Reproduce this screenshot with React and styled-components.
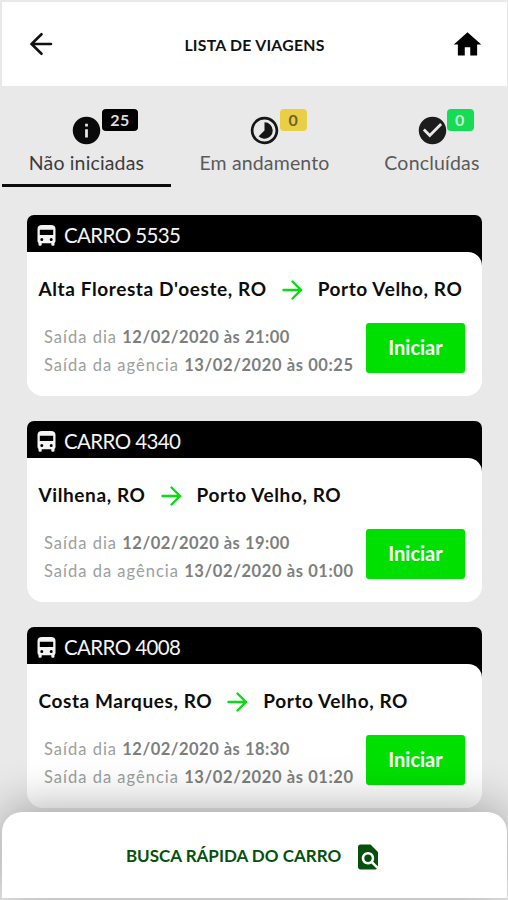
import React from "react"
import styled, { createGlobalStyle } from "styled-components"
import {
  MdHome,
  MdInfo,
  MdTimelapse,
  MdCheckCircle,
  MdFindInPage,
} from "react-icons/md"

const GlobalStyle = createGlobalStyle`
  * {
    box-sizing: border-box;
  }

  body {
    margin: 0;
    background: #e9e9e9;
    font-family: Lato, "Open Sans", sans-serif;
  }

  svg {
    display: block;
    flex-shrink: 0;
  }
`

const Screen = styled.div`
  display: flex;
  flex-direction: column;
  width: 508px;
  height: 900px;
  padding: 2px 1px 2px 2px;
  overflow: hidden;
  background: #e9e9e9;
`

const Header = styled.header`
  display: flex;
  align-items: center;
  justify-content: space-between;
  flex-shrink: 0;
  height: 84px;
  padding: 0 23px 0 27px;
  background: #fff;
`

const Title = styled.h1`
  margin: 0 0 0 5px;
  color: #111;
  font-size: 15.8px;
  font-weight: 700;
  letter-spacing: 0.25px;
  white-space: nowrap;
`

const Tabs = styled.nav`
  display: grid;
  grid-template-columns: 169px 187px 148px;
  flex-shrink: 0;
  height: 101px;
`

const Tab = styled.a`
  display: flex;
  flex-direction: column;
  align-items: center;
  padding-top: 28px;
  border-bottom: 3px solid ${props => (props.$active ? "#0c0c0c" : "transparent")};
  color: ${props => (props.$active ? "#3c3c3c" : "#5a5a5a")};
`

const TabIcon = styled.div`
  position: relative;
  color: ${props => props.$color};
`

const Badge = styled.span`
  position: absolute;
  top: -5px;
  left: ${props => props.$left}px;
  width: ${props => props.$width}px;
  height: 22px;
  border-radius: 4px;
  background: ${props => props.$bg};
  color: ${props => props.$color};
  font-size: 16px;
  font-weight: 700;
  line-height: 22px;
  letter-spacing: 0.5px;
  text-align: center;
`

const TabLabel = styled.span`
  margin-top: 4px;
  font-size: 19.5px;
  line-height: 24px;
  letter-spacing: ${props => props.$spacing}px;
  white-space: nowrap;
`

const List = styled.main`
  display: flex;
  flex-direction: column;
  flex: 1;
  gap: 25.2px;
  min-height: 0;
  padding: 28px 25px 0 25px;
`

const Card = styled.article`
  flex-shrink: 0;
  height: 181px;
  border-radius: 7px 7px 16px 16px;
  background: linear-gradient(#000 60px, #fff 60px);
  overflow: hidden;
`

const CardHeader = styled.div`
  display: flex;
  align-items: center;
  gap: 8px;
  height: 37px;
  padding: 3px 0 0 10px;
  color: #f4f4f4;
  font-size: 20.5px;
  line-height: 24px;
  letter-spacing: -0.6px;

  span {
    margin-top: -1px;
  }
`

const CardBody = styled.div`
  height: 144px;
  padding: 23px 17px 0 11.5px;
  border-radius: 0 14px 16px 16px;
  background: #fff;
`

const Route = styled.div`
  display: flex;
  align-items: center;
  height: 28px;
  color: #0d0d0d;
  font-size: 19px;
  font-weight: 700;
  line-height: 28px;
  white-space: nowrap;

  svg {
    margin: 2px 15px 0 15px;
  }
`

const City = styled.span`
  letter-spacing: ${props => props.$spacing}px;
`

const Details = styled.div`
  display: flex;
  justify-content: space-between;
  padding-left: 5.5px;
  margin-top: 20px;
`

const Times = styled.div`
  color: #9b9f9d;
  font-size: 16.5px;
  line-height: 28px;
  letter-spacing: 1px;
  white-space: nowrap;
`

const Line = styled.div`
  strong {
    color: #7b807e;
    font-weight: 700;
    letter-spacing: ${props => props.$spacing}px;
  }
`

const StartButton = styled.button`
  width: 99px;
  height: 50px;
  padding: 0 0 3px;
  border: 0;
  border-radius: 3px;
  background: #00e000;
  color: #fff;
  font-family: inherit;
  font-size: 20px;
  font-weight: 700;
`

const Footer = styled.footer`
  position: relative;
  display: flex;
  align-items: center;
  justify-content: center;
  flex-shrink: 0;
  gap: 12px;
  height: 86px;
  padding: 3px 0 0;
  border-radius: 20px 20px 0 0;
  background: #fff;
  box-shadow: 0 -4px 48px rgba(0, 0, 0, 0.33);
  color: #06500d;
  font-size: 17px;
  font-weight: 700;
  line-height: 20px;

  span {
    margin-top: -1px;
  }
`

const BackArrow = () => (
  <svg width="24" height="24" viewBox="0 0 24 24" fill="none" stroke="#111" strokeWidth="2.6" strokeLinecap="round">
    <path d="M22 12H2.5M12.5 2.2L2.5 12l10 9.8" />
  </svg>
)

const RouteArrow = () => (
  <svg width="21" height="20" viewBox="0 0 21 20" fill="none" stroke="#08dc12" strokeWidth="2.4" strokeLinecap="round">
    <path d="M1.5 10h17.5M10.500 1.500L19 10l-8.500 8.500" />
  </svg>
)

const BusIcon = () => (
  <svg width="19" height="21" viewBox="0 0 19 21" fill="#f4f4f4">
    <path
      fillRule="evenodd"
      d="M5 0h9q4.500 0 4.500 4V16q0 1.200-1 2v1.500q0 1.200-1.200 1.200h-.8q-1.200 0-1.200-1.200V18.300H4.700v1.200q0 1.200-1.200 1.200h-.8q-1.200 0-1.200-1.200V18q-1-.8-1-2V4Q.5 0 5 0zM2.800 4.800v5.200h13.400V4.800zM4.800 13a1.500 1.500 0 1 0 0 3 1.500 1.500 0 0 0 0-3zm9.400 0a1.500 1.500 0 1 0 0 3 1.500 1.500 0 0 0 0-3z"
    />
  </svg>
)

const tabs = [
  { label: "Não iniciadas", count: 25, icon: MdInfo, color: "#0a0a0a", badge: "#000", text: "#ddd", left: 32, width: 36, spacing: 0.15, active: true },
  { label: "Em andamento", count: 0, icon: MdTimelapse, color: "#161616", badge: "#e9cf45", text: "#6e6228", left: 32, width: 27, spacing: 0.15 },
  { label: "Concluídas", count: 0, icon: MdCheckCircle, color: "#1c1c1c", badge: "#15db55", text: "#c8f7d4", left: 31, width: 27, spacing: 0.2 },
]

const trips = [
  { car: "5535", from: "Alta Floresta D'oeste, RO", day: "12/02/2020 às 21:00", agency: "13/02/2020 às 00:25" },
  { car: "4340", from: "Vilhena, RO", day: "12/02/2020 às 19:00", agency: "13/02/2020 às 01:00" },
  { car: "4008", from: "Costa Marques, RO", day: "12/02/2020 às 18:30", agency: "13/02/2020 às 01:20" },
]

const App = () => (
  <Screen>
    <GlobalStyle />
    <Header>
      <BackArrow />
      <Title>LISTA DE VIAGENS</Title>
      <MdHome size={33} />
    </Header>
    <Tabs>
      {tabs.map(tab => (
        <Tab key={tab.label} $active={tab.active}>
          <TabIcon $color={tab.color}>
            <tab.icon size={33} />
            <Badge $left={tab.left} $width={tab.width} $bg={tab.badge} $color={tab.text}>{tab.count}</Badge>
          </TabIcon>
          <TabLabel $spacing={tab.spacing}>{tab.label}</TabLabel>
        </Tab>
      ))}
    </Tabs>
    <List>
      {trips.map(trip => (
        <Card key={trip.car}>
          <CardHeader>
            <BusIcon />
            <span>CARRO {trip.car}</span>
          </CardHeader>
          <CardBody>
            <Route>
              <City $spacing={0.6}>{trip.from}</City>
              <RouteArrow />
              <City $spacing={0.6}>Porto Velho, RO</City>
            </Route>
            <Details>
              <Times>
                <Line $spacing={0.5}>Saída dia <strong>{trip.day}</strong></Line>
                <Line $spacing={0.6}>Saída da agência <strong>{trip.agency}</strong></Line>
              </Times>
              <StartButton>Iniciar</StartButton>
            </Details>
          </CardBody>
        </Card>
      ))}
    </List>
    <Footer>
      <span>BUSCA RÁPIDA DO CARRO</span>
      <MdFindInPage size={30} />
    </Footer>
  </Screen>
)

export default App
